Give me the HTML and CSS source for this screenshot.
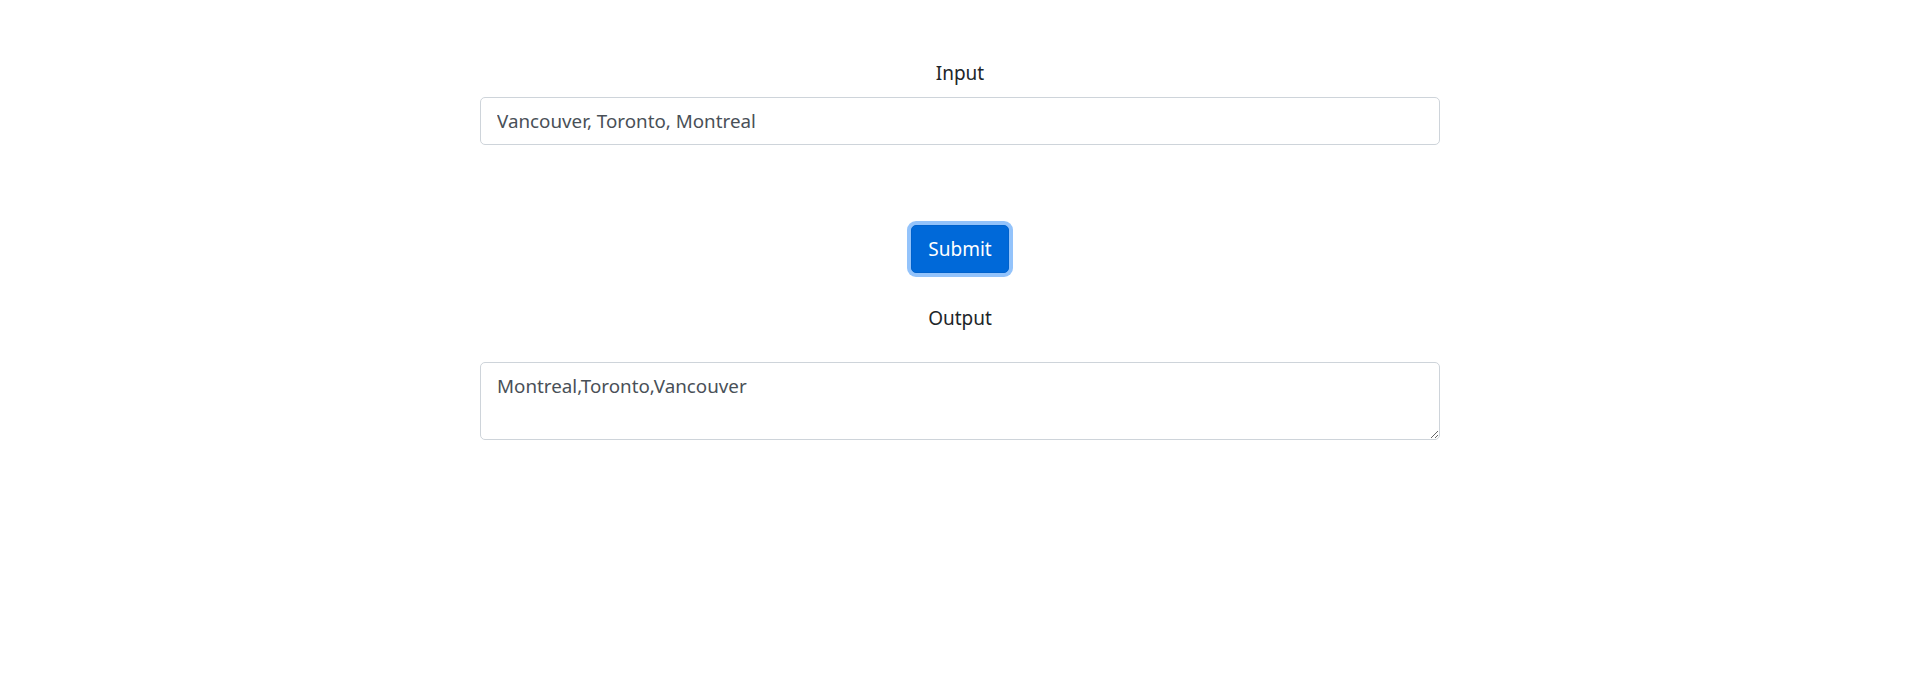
FILE: index.html
```html
<!DOCTYPE html>
<html lang="en">
<head>
<meta charset="utf-8">
<title>Sort</title>
<link rel="stylesheet" href="styles.css">
</head>
<body>
<main class="page">
  <div class="field">
    <label class="label" for="in">Input</label>
    <input id="in" class="control" type="text" value="Vancouver, Toronto, Montreal">
  </div>
  <div class="actions">
    <button class="btn" type="button">Submit</button>
  </div>
  <div class="field">
    <label class="label label-out" for="out">Output</label>
    <textarea id="out" class="control area" rows="2">Montreal,Toronto,Vancouver</textarea>
  </div>
</main>
</body>
</html>
```
FILE: styles.css
```css
* { box-sizing: border-box; }
html, body { margin: 0; padding: 0; background: #fff; }
body {
  font-family: "Noto Sans", "Open Sans", "Liberation Sans", sans-serif;
  color: #212529;
}
.page {
  width: 960px;
  margin: 0 auto;
  padding-top: 61px;
  display: flex;
  flex-direction: column;
}
.field {
  display: flex;
  flex-direction: column;
  align-items: stretch;
}
.label {
  display: block;
  text-align: center;
  font-size: 19px;
  line-height: 24px;
  margin-bottom: 12px;
}
.label-out { margin-bottom: 32px; }
.control {
  display: block;
  width: 100%;
  font-family: inherit;
  font-size: 18.8px;
  line-height: 30px;
  padding: 8px 16px;
  color: #495057;
  background: #fff;
  border: 1px solid #ced4da;
  border-radius: 5px;
  outline: none;
  height: 48px;
}
.area {
  height: 78px;
  resize: vertical;
}
.actions {
  display: flex;
  justify-content: center;
  padding-top: 80px;
  padding-bottom: 33px;
}
.btn {
  font-family: inherit;
  font-size: 19px;
  line-height: 30px;
  padding: 8px 16px;
  color: #fff;
  background: #0069d9;
  border: 1px solid #0062cc;
  border-radius: 5px;
  box-shadow: 0 0 0 4px #93c3fb;
  cursor: pointer;
}
```
